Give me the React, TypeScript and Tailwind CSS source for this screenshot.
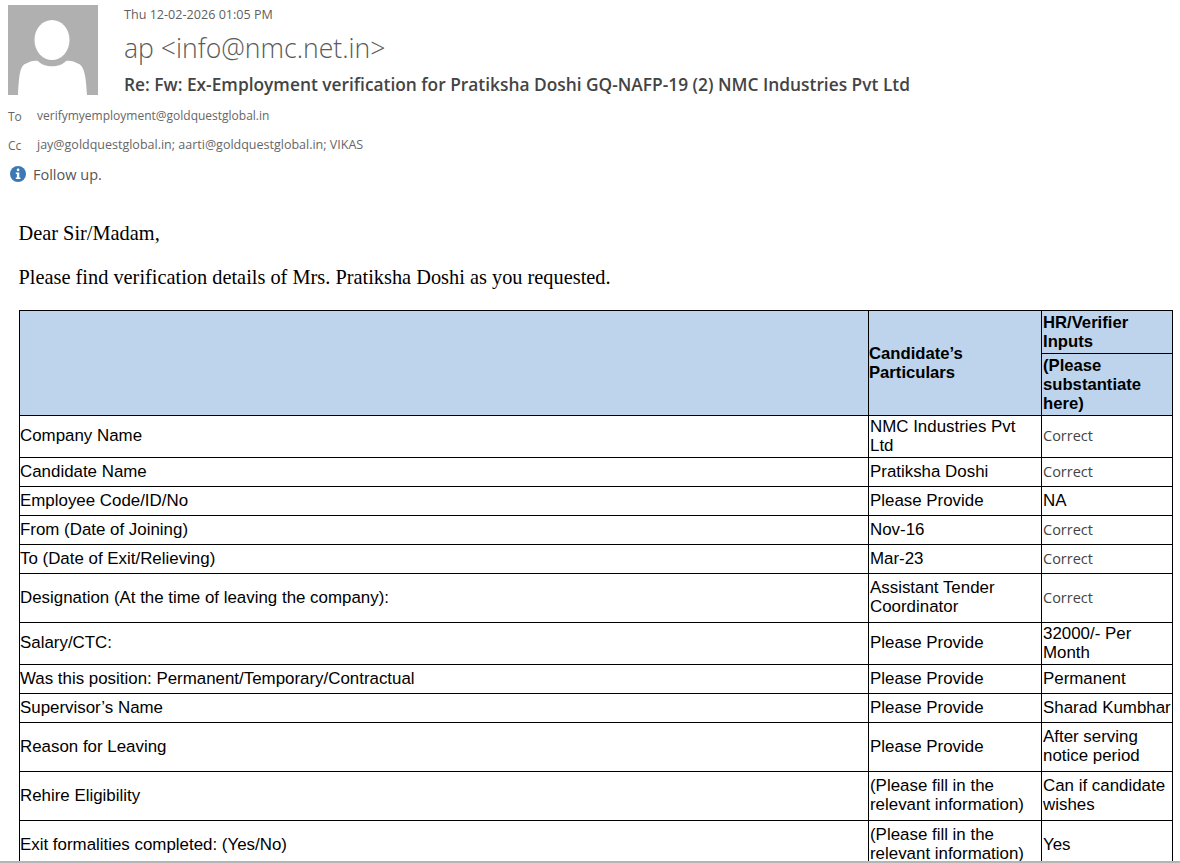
import React from 'react'

const rows = [
    {label: 'Company Name', value: 'NMC Industries Pvt Ltd', input: 'Correct', h: 'h-[42px]', soft: true},
    {label: 'Candidate Name', value: 'Pratiksha Doshi', input: 'Correct', h: 'h-[29px]', soft: true},
    {label: 'Employee Code/ID/No', value: 'Please Provide', input: 'NA', h: 'h-[29px]', soft: false},
    {label: 'From (Date of Joining)', value: 'Nov-16', input: 'Correct', h: 'h-[29px]', soft: true},
    {label: 'To (Date of Exit/Relieving)', value: 'Mar-23', input: 'Correct', h: 'h-[29px]', soft: true},
    {label: 'Designation (At the time of leaving the company):', value: 'Assistant Tender Coordinator', input: 'Correct', h: 'h-[49px]', soft: true},
    {label: 'Salary/CTC:', value: 'Please Provide', input: '32000/- Per Month', h: 'h-[42px]', soft: false},
    {label: 'Was this position: Permanent/Temporary/Contractual', value: 'Please Provide', input: 'Permanent', h: 'h-[29px]', soft: false},
    {label: 'Supervisor’s Name', value: 'Please Provide', input: 'Sharad Kumbhar', h: 'h-[29px]', soft: false},
    {label: 'Reason for Leaving', value: 'Please Provide', input: 'After serving notice period', h: 'h-[49px]', soft: false},
    {label: 'Rehire Eligibility', value: '(Please fill in the relevant information)', input: 'Can if candidate wishes', h: 'h-[49px]', soft: false},
    {label: 'Exit formalities completed: (Yes/No)', value: '(Please fill in the relevant information)', input: 'Yes', h: 'h-[49px]', soft: false},
]

function Avatar() {
    return (
        <svg width="90" height="90" viewBox="0 0 90 90" className="shrink-0">
            <rect width="90" height="90" fill="#b0b0b0"/>
            <ellipse cx="44" cy="35" rx="17.5" ry="20" fill="#ffffff"/>
            <path d="M10 90 C11 70 12 62 17 59 C22 56 27 55 30 56 C36 63 52 63 58 56 C61 55 66 56 71 59 C76 62 78 70 79 90 Z" fill="#ffffff"/>
        </svg>
    )
}

function InfoIcon() {
    return (
        <svg width="16" height="16" viewBox="0 0 16 16" className="shrink-0">
            <circle cx="8" cy="8" r="8" fill="#3b78b5"/>
            <rect x="6.8" y="2.6" width="2.6" height="2.6" rx="1.2" fill="#ffffff"/>
            <path d="M5.8 6.6 H9.3 V11.6 H10.4 V13 H5.8 V11.6 H6.9 V8 H5.8 Z" fill="#ffffff"/>
        </svg>
    )
}

export default function App() {
    return (
        <div className="w-[1180px] h-[863px] overflow-hidden bg-white">
            <div className="h-[861px] overflow-hidden">
                {/* Cabecera */}
                <div className="flex pl-2 pt-[5px] font-['Open_Sans',sans-serif]">
                    <Avatar/>
                    <div className="ml-[26px] pt-px">
                        <p className="text-[12.6px] leading-[18px] text-[#5f5f5f]">Thu 12-02-2026 01:05 PM</p>
                        <p className="mt-[7px] text-[26.6px] leading-[34px] font-light text-[#5a5a5a]">ap &lt;info@nmc.net.in&gt;</p>
                        <p className="mt-[7px] text-[17.33px] leading-[24px] font-semibold text-[#444444]">
                            Re: Fw: Ex-Employment verification for Pratiksha Doshi GQ-NAFP-19 (2) NMC Industries Pvt Ltd
                        </p>
                    </div>
                </div>
                <div className="mt-[5px] pl-2 leading-[29px] text-[#666666] font-['Open_Sans',sans-serif]">
                    <div className="flex h-[29px] text-[12px]">
                        <span className="w-[29px] pt-px">To</span>
                        <span>verifymyemployment@goldquestglobal.in</span>
                    </div>
                    <div className="flex h-[29px] text-[12.5px]">
                        <span className="w-[29px] pt-px text-[12px]">Cc</span>
                        <span>jay@goldquestglobal.in; aarti@goldquestglobal.in; VIKAS</span>
                    </div>
                </div>
                <div className="flex items-center gap-[7px] pl-[10px] h-[28px] mt-px text-[14.5px] text-[#555555] font-['Open_Sans',sans-serif]">
                    <InfoIcon/>
                    <span className="pt-[2px]">Follow up.</span>
                </div>

                {/* Mensaje */}
                <div className="pl-[18.5px] mt-[33px] font-['Liberation_Serif',serif] text-[20.35px] leading-[24px] text-black">
                    <p>Dear Sir/Madam,</p>
                    <p className="mt-[20px]">Please find verification details of Mrs. Pratiksha Doshi as you requested.</p>
                </div>

                {/* Tabla */}
                <table className="ml-[19px] mt-[21px] w-[1153px] table-fixed border-collapse font-['Liberation_Sans',sans-serif] text-[16.9px] leading-[19px] text-black">
                    <colgroup>
                        <col className="w-[849px]"/>
                        <col className="w-[173px]"/>
                        <col className="w-[131px]"/>
                    </colgroup>
                    <thead>
                        <tr className="h-[43px] bg-[#bdd4ec] font-bold text-[16.67px]">
                            <th rowSpan={2} className="border border-black"/>
                            <th rowSpan={2} className="border border-black text-left">Candidate’s Particulars</th>
                            <th className="border border-black px-px text-left">HR/Verifier Inputs</th>
                        </tr>
                        <tr className="h-[62px] bg-[#bdd4ec] font-bold text-[16.67px]">
                            <th className="border border-black px-px text-left">(Please substantiate here)</th>
                        </tr>
                    </thead>
                    <tbody>
                        {rows.map(row => (
                            <tr key={row.label} className={row.h}>
                                <td className="border border-black pb-[2px]">{row.label}</td>
                                <td className="border border-black px-px pb-[2px]">{row.value}</td>
                                <td className={row.soft
                                    ? "border border-black px-px pb-[2px] font-['Open_Sans',sans-serif] text-[14.5px] text-[#444444]"
                                    : "border border-black px-px pb-[2px]"}>
                                    {row.input}
                                </td>
                            </tr>
                        ))}
                    </tbody>
                </table>
            </div>
            <div className="h-[2px] bg-[#b5b5b5]"/>
        </div>
    )
}
